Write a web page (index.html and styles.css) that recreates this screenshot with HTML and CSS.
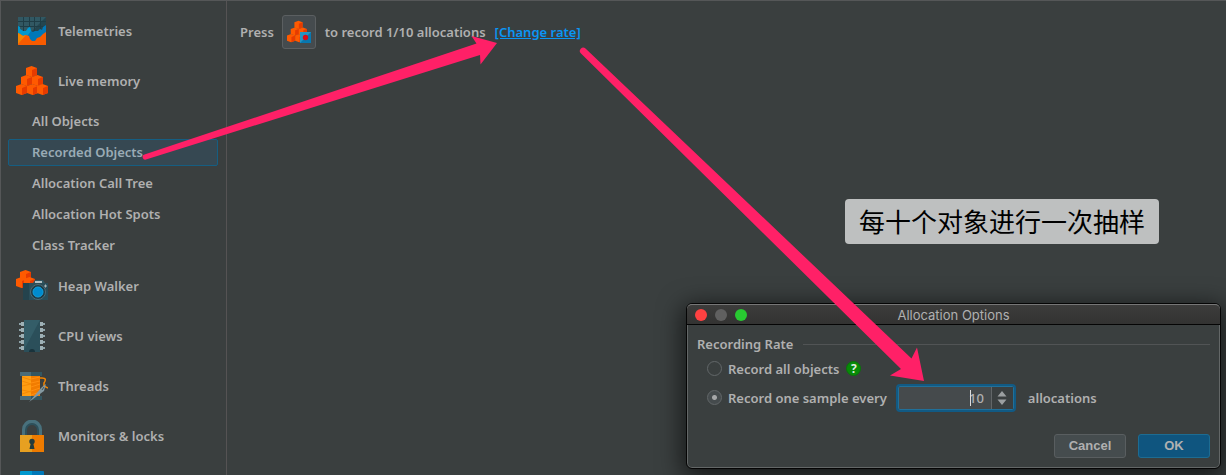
FILE: index.html
```html
<!DOCTYPE html>
<html lang="en">
<head>
<meta charset="utf-8">
<title>Recorded Objects</title>
<link rel="stylesheet" href="styles.css">
</head>
<body class="app">
<svg class="defs" aria-hidden="true">
  <defs>
    <g id="cube">
      <path fill="#ff5a00" d="M0 2 5.500 0 11 2V9L5.500 11 0 9Z"/>
      <path fill="#e63b00" d="M6 4 11 2V9L6 11Z"/>
    </g>
    <g id="cubes">
      <use href="#cube" x="10" y="1"/>
      <use href="#cube" x="5" y="10"/><use href="#cube" x="16" y="10"/>
      <use href="#cube" x="0" y="19"/><use href="#cube" x="11" y="19"/><use href="#cube" x="21" y="19"/>
    </g>
  </defs>
</svg>

<nav class="sidebar">
  <a class="category" href="#telemetries">
    <svg class="icon" viewBox="0 0 32 32">
      <path fill="#24454f" d="M2 2h28v28H2z"/>
      <path fill="#315863" d="M2 2h28L12 20H2z"/>
      <path stroke="#1f3d46" fill="none" d="M7.500 2v14M13.500 2v12M18.500 2v14M24.500 2v12M2 6.500h28M2 11.500h28"/>
      <path fill="#0078b8" d="M2 11l2 1v2l3 2h3l2-3 2-1 1 4 2 1 2-1h3l2-2 2 1 1-3 3-2v19H2z"/>
      <path fill="#0098ce" d="M2 11l2 1v2l3 2h3l2-3 2-1 1 4-6 8H2z"/>
      <path fill="#f75b00" d="M2 18l2 1 3 2 3-1 3 1 1 3 2 2h3l2-3 3-1 3-3 3-2v13H2z"/>
      <path fill="#f18500" d="M2 18l2 1 3 2 3-1L2 29z"/>
    </svg>Telemetries</a>
  <a class="category" href="#memory">
    <svg class="icon" viewBox="0 0 32 32"><use href="#cubes"/></svg>Live memory</a>
  <div class="views">
    <a class="view" href="#all">All Objects</a>
    <a class="view view-selected" href="#recorded">Recorded Objects</a>
    <a class="view" href="#tree">Allocation Call Tree</a>
    <a class="view" href="#hotspots">Allocation Hot Spots</a>
    <a class="view" href="#tracker">Class Tracker</a>
  </div>
  <a class="category" href="#heap">
    <svg class="icon" viewBox="0 0 32 32">
      <use href="#cube" x="4" y="0"/><use href="#cube" x="0" y="7"/><use href="#cube" x="8" y="7"/>
      <path fill="#2a4d58" d="M7 13h25v17H7z"/>
      <path fill="#24434d" d="M7 13h6v17H7z"/>
      <path fill="#315660" d="M17 13l2-3h8l2 3z"/><path fill="#b3bfc2" d="M19 11h7v2h-7z"/>
      <circle cx="22" cy="22" r="7.500" fill="#203b44" stroke="#4d6a73"/>
      <circle cx="22" cy="22" r="5" fill="#008bce" stroke="#10a0dc"/>
      <path stroke="#a7b5b9" d="M28 16h3M29.500 14.500v3"/>
    </svg>Heap Walker</a>
  <a class="category" href="#cpu">
    <svg class="icon" viewBox="0 0 32 32">
      <path stroke="#8fa4aa" stroke-width="2" d="M3 4h26M3 10h26M3 16h26M3 22h26M3 28h26"/>
      <path stroke="#9eb0b5" stroke-width="4" d="M5 4h22M5 10h22M5 16h22M5 22h22M5 28h22"/>
      <path fill="#2b4f5a" d="M8 0h16v32H8z"/><path fill="#345d68" d="M8 0h16L8 30z"/>
      <path fill="#19333c" d="M13 32a3 3 0 0 1 6 0z"/>
    </svg>CPU views</a>
  <a class="category" href="#threads">
    <svg class="icon" viewBox="0 0 32 32">
      <path fill="#345661" d="M4 2h22v4H4zM4 26h22v4H4z"/><path fill="#4b6c78" d="M4 2h11v4H4zM4 26h11v4H4z"/>
      <path fill="#f17c00" d="M6 6h18v20H6z"/><path fill="#ff9e12" d="M6 6h9v20H6z"/>
      <path stroke="#f58a05" fill="none" d="M6 7l9 3M6 11l9 3M6 16l9-2M6 20l9 2M6 24l9-3"/>
      <path stroke="#ff8e10" fill="none" d="M15 9l9-2M15 13l9-2M15 17l9-3M15 21l9-3M15 25l9-3"/>
      <path stroke="#f48500" stroke-width="1.500" fill="none" d="M24 8h2c4 0 4 2 2 5v3l4 2"/>
      <path fill="#8499a1" d="M30 14l-2 7-15 11 13-15z"/><path stroke="#3d555e" d="M28 17l-2 3"/>
    </svg>Threads</a>
  <a class="category" href="#locks">
    <svg class="icon" viewBox="0 0 32 32">
      <path fill="none" stroke="#48707c" stroke-width="4" d="M8 16V9.500a8 8 0 0 1 16 0V16"/>
      <path fill="none" stroke="#2d505b" stroke-width="2" d="M10 16V10a6 6 0 0 1 12 0v6"/>
      <path fill="#e7a021" d="M4 15h12v17H4z"/><path fill="#ee7b00" d="M16 15h12v17H16z"/>
      <circle cx="16" cy="21.500" r="2.700" fill="#253b3c"/><path fill="#253b3c" d="M15 22h2l1.500 7h-5z"/>
    </svg>Monitors &amp; locks</a>
  <a class="category" href="#databases" aria-label="Databases">
    <svg class="icon" viewBox="0 0 32 32"><rect x="4" y="1" width="24" height="28" rx="1" fill="#0078b8"/><path fill="#0098ce" d="M5 1h11v28H4V2z"/></svg></a>
</nav>

<main class="content">
  <div class="record-line">
    <span>Press</span>
    <button class="record-button" type="button" aria-label="Record allocations">
      <svg class="icon-record" viewBox="0 0 24 24">
        <use href="#cubes" transform="scale(.74)"/>
        <path fill="#0878b0" d="M13 12h11v11H13z"/><path fill="#2594c2" d="M13 12h11L13 23z"/>
        <circle cx="18.500" cy="17.500" r="2.700" fill="#d80c18"/>
      </svg>
    </button>
    <span>to record 1/10 allocations</span>
    <a class="change-rate" href="#rate">[Change rate]</a>
  </div>
</main>

<p class="callout" lang="zh">每十个对象进行一次抽样</p>

<form class="dialog" role="dialog" aria-labelledby="dialog-title">
  <header class="titlebar">
    <div class="lights">
      <button class="light light-close" type="button" aria-label="Close"></button>
      <button class="light" type="button" aria-label="Minimize" disabled></button>
      <button class="light light-zoom" type="button" aria-label="Zoom"></button>
    </div>
    <h1 class="dialog-title" id="dialog-title">Allocation Options</h1>
  </header>
  <div class="dialog-body">
    <h2 class="group-title">Recording Rate</h2>
    <div class="option">
      <input class="radio" type="radio" name="rate" id="rate-all">
      <label for="rate-all">Record all objects</label>
      <button class="help" type="button" aria-label="Help">?</button>
    </div>
    <div class="option">
      <input class="radio" type="radio" name="rate" id="rate-sample" checked>
      <label for="rate-sample">Record one sample every</label>
      <div class="spinner">
        <input class="spinner-input" type="text" value="10" aria-label="Allocations per sample">
        <span class="caret"></span>
        <button class="stepper" type="button" aria-label="Change value">
          <svg width="10" height="14" viewBox="0 0 10 14"><path fill="#9b9fa1" d="M5 0l4.500 5.500h-9zM.500 8.500h9L5 14z"/></svg>
        </button>
      </div>
      <span>allocations</span>
    </div>
    <div class="actions">
      <button class="action" type="button">Cancel</button>
      <button class="action action-primary" type="submit">OK</button>
    </div>
  </div>
</form>

<svg class="arrows" width="1226" height="475" viewBox="0 0 1226 475" aria-hidden="true">
  <g fill="#ff2067">
    <path d="M144.500 154.500 476.500 43.500 471.500 36 497 43 480.500 64.500 480 55 146 159.500A2.500 2.500 0 0 1 144.500 154.500Z"/>
    <path d="M585.500 48.500 911.500 358.500 917 347.500 924 381 890 375.500 901 369 581 53.500A3 3 0 0 1 585.500 48.500Z"/>
  </g>
</svg>
</body>
</html>
```

FILE: styles.css
```css
* { box-sizing: border-box; }

.app {
  position: relative;
  display: flex;
  height: 100vh;
  margin: 0;
  overflow: hidden;
  border-top: 1px solid #555758;
  border-left: 1px solid #555758;
  background: #3a3f3f;
  color: #b0b0b0;
  font: 600 13px/20px "Noto Sans", "Noto Sans CJK SC", sans-serif;
}

.defs { position: absolute; width: 0; height: 0; }

button, input { margin: 0; padding: 0; font: inherit; color: inherit; }

.sidebar {
  flex: none;
  width: 226px;
  height: 100%;
  overflow: hidden;
  padding: 5px 8px 0 7px;
  border-right: 1px solid #555354;
}
.category {
  display: flex;
  align-items: center;
  gap: 10px;
  height: 50px;
  padding-left: 8px;
  color: inherit;
  text-decoration: none;
}
.icon { width: 32px; height: 32px; }
.views { display: flex; flex-direction: column; gap: 4px; padding: 2px 0; }
.view {
  height: 27px;
  padding: 2px 0 3px 23px;
  border: 1px solid transparent;
  border-radius: 2px;
  color: inherit;
  text-decoration: none;
}
.view-selected {
  border-color: #155e82;
  background: #364852;
  color: #9aabb5;
}

.content { flex: 1; padding: 14px 13px; }
.record-line { display: flex; align-items: center; }
.record-button {
  display: flex;
  align-items: center;
  justify-content: center;
  width: 34px;
  height: 34px;
  margin: 0 9px 0 8px;
  border: 1px solid #5b5f61;
  border-radius: 3px;
  background: #454b4e;
}
.icon-record { width: 24px; height: 24px; }
.change-rate { margin-left: 9px; color: #0a96f5; }

.callout {
  position: absolute;
  top: 198px;
  right: 67px;
  margin: 0;
  padding: 0 14px 2px;
  border-radius: 4px;
  background: #bec0c0;
  color: #000;
  font: 400 26px/43px "Noto Sans CJK SC", sans-serif;
}

.dialog {
  position: absolute;
  right: 5px;
  bottom: 6px;
  width: 535px;
  border: 1px solid #050505;
  border-radius: 6px;
  background: #3a3f3f;
  box-shadow: inset 0 0 0 1px #636767, 0 6px 24px 4px rgba(0, 0, 0, .6);
}
.titlebar {
  display: grid;
  grid-template-columns: 1fr auto 1fr;
  align-items: center;
  height: 21px;
  padding: 0 8px;
  border-top: 1px solid #777;
  border-bottom: 1px solid #050505;
  border-radius: 5px 5px 0 0;
  background: linear-gradient(#3c3c3b, #333332);
}
.lights { display: flex; gap: 8px; }
.light {
  width: 12px;
  height: 12px;
  border: 0;
  border-radius: 50%;
  background: #606060;
}
.light-close { background: #ff4141; }
.light-zoom { background: #28c931; }
.dialog-title { margin: 0; font: 400 13px/20px Inter, sans-serif; }
.dialog-body { padding: 9px 10px 10px; }
.group-title {
  display: flex;
  align-items: center;
  gap: 10px;
  margin: 0;
  font: inherit;
}
.group-title::after { content: ""; flex: 1; height: 1px; background: #515455; }
.option {
  display: flex;
  align-items: center;
  height: 29px;
  padding-left: 10px;
}
.radio {
  appearance: none;
  width: 15px;
  height: 15px;
  margin-right: 6px;
  border: 1px solid #626769;
  border-radius: 50%;
}
.radio:checked { background: radial-gradient(circle, #a5a7a8 0 2px, #454b4d 3px); }
.help {
  width: 15px;
  height: 15px;
  margin-left: 7px;
  border: 1px solid #087508;
  border-radius: 50%;
  background: #078c07;
  color: #e0eee0;
  font-weight: 700;
  font-size: 12px;
  line-height: 13px;
}
.spinner {
  position: relative;
  display: flex;
  width: 120px;
  height: 28px;
  margin: 0 12px 0 9px;
  border: 2px solid #115a84;
  border-radius: 4px;
  background: #454a4c;
  box-shadow: inset 0 0 0 1px #217099;
}
.spinner-input {
  flex: 1;
  min-width: 0;
  padding-right: 6px;
  border: 0;
  outline: 0;
  background: none;
  font-weight: 500;
  text-align: right;
}
.caret {
  position: absolute;
  top: 4px;
  right: 43px;
  width: 1px;
  height: 16px;
  background: #ddd;
}
.stepper {
  display: flex;
  align-items: center;
  justify-content: center;
  width: 22px;
  margin: 1px;
  border: 0;
  border-left: 1px solid #626668;
  background: #3a3f40;
}
.actions {
  display: flex;
  justify-content: flex-end;
  gap: 12px;
  margin-top: 22px;
}
.action {
  width: 72px;
  height: 24px;
  border: 1px solid #595e60;
  border-radius: 3px;
  background: #454c4e;
  font: 700 13px/20px "Liberation Sans", sans-serif;
}
.action-primary { border-color: #1d6c92; background: #0f557f; }

.arrows { position: absolute; top: -1px; left: -1px; pointer-events: none; }
```
